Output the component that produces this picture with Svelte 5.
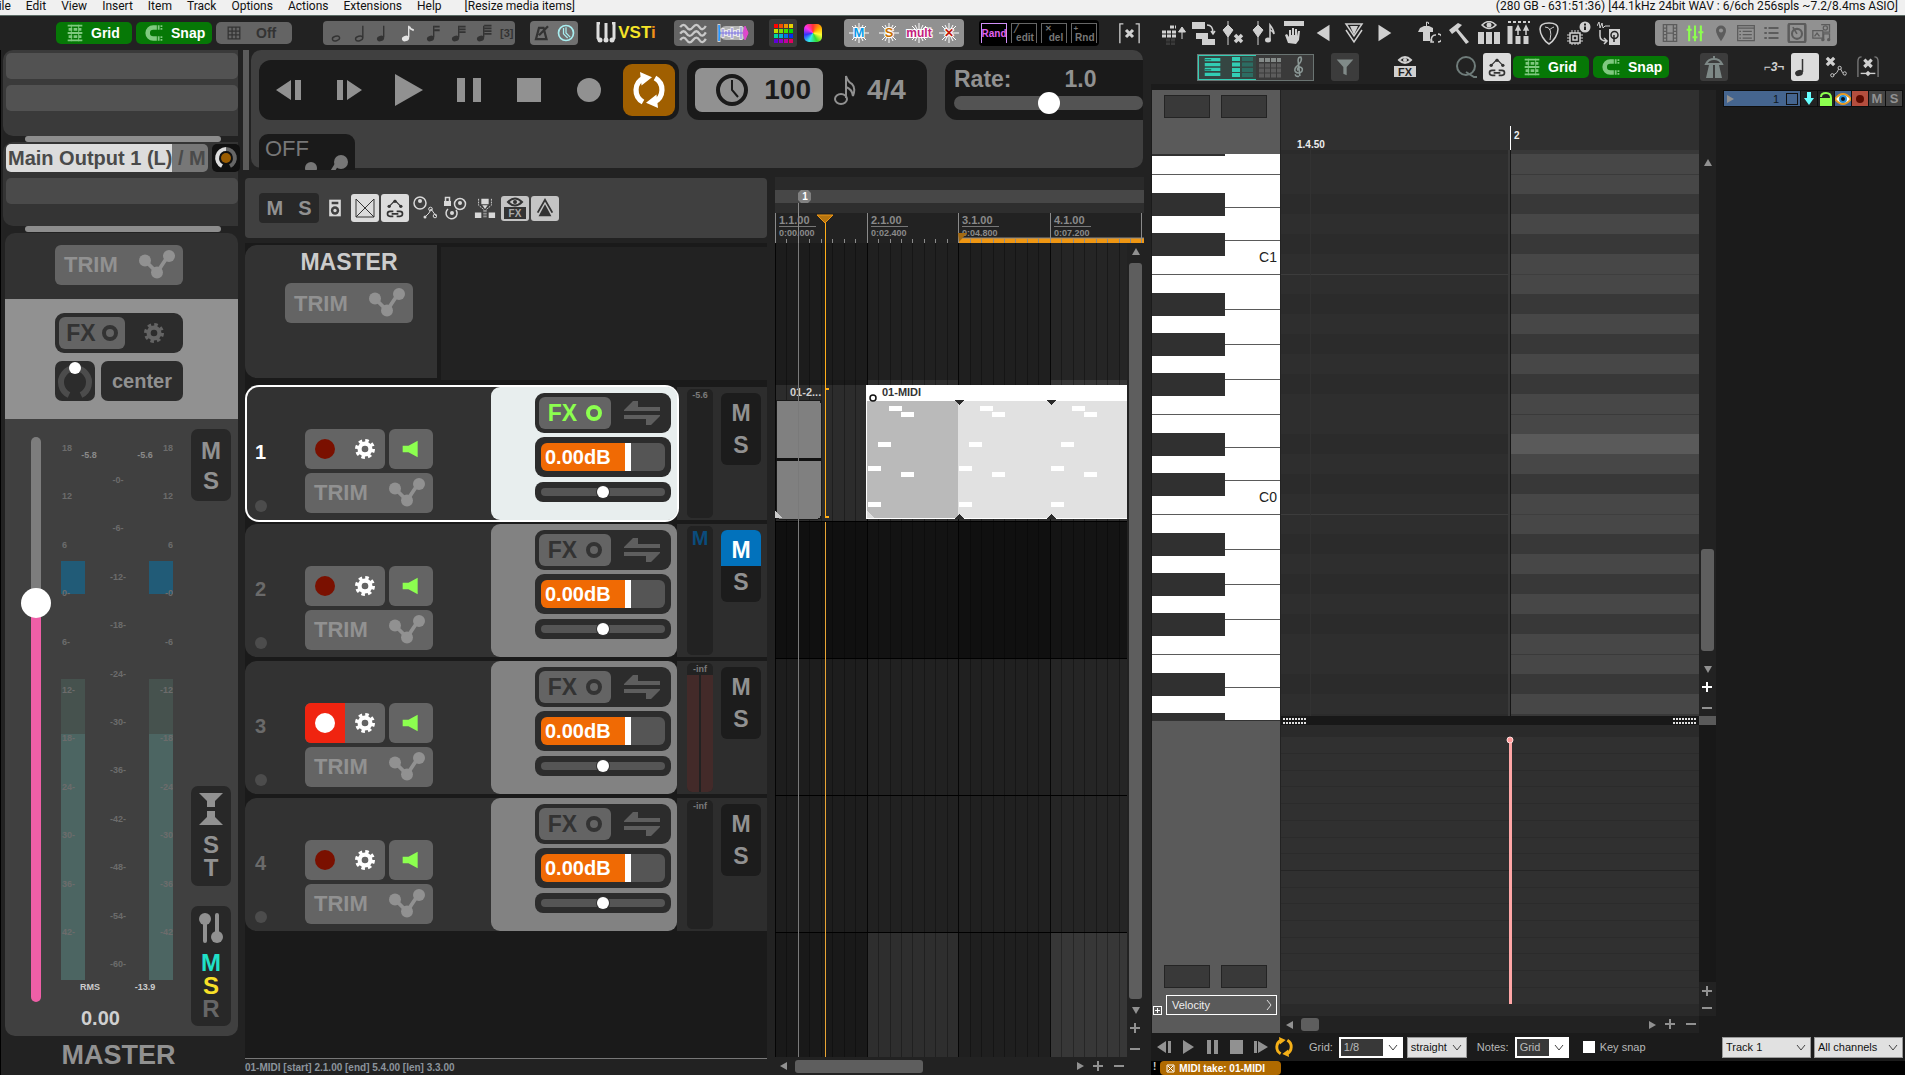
<script lang="ts">
  type Track = {
    id: number;
    selected?: boolean;
    muted?: boolean;
    armed?: boolean;
    fx?: boolean;
    peak?: string;
  };

  const menus = ['File', 'Edit', 'View', 'Insert', 'Item', 'Track', 'Options', 'Actions', 'Extensions', 'Help'];

  const tracks: Track[] = [
    { id: 1, selected: true, fx: true, peak: '-5.6' },
    { id: 2, muted: true },
    { id: 3, armed: true, peak: '-inf' },
    { id: 4, peak: '-inf' },
  ];

  const noteLengths = ['whole', 'half', 'quarter', 'eighth', 'n16', 'n32', 'n64'];
  const bursts = [
    { text: 'M', color: '#0a9be8', size: 13 },
    { text: 'S', color: '#c87000', size: 13 },
    { text: 'mult', color: '#c4207c', size: 12 },
    { text: '✕', color: '#c01808', size: 12 },
  ];
  const tools = ['gridUp', 'cascade', 'nodeX', 'nodeNote', 'hand', 'left', 'downTri', 'right'];
  const views = ['shirt', 'hammer', 'eyeBars', 'barsUp', 'pick', 'chip', 'drive'];
  const docks = ['film', 'sliders', 'pin', 'notepad', 'list', 'knobBox', 'media'];

  const stem = (flags: string) =>
    `<ellipse cx="6" cy="18" rx="4" ry="3" transform="rotate(-20 6 18)" fill="currentColor"/><path d="M9.5 17V4" stroke="currentColor" stroke-width="1.5"/><path d="${flags}" stroke="currentColor" stroke-width="2" fill="none"/>`;
  const eye = (y: number) =>
    `<path d="M5 ${y}q7-7 14 0q-7 7-14 0z" fill="none" stroke="currentColor" stroke-width="1.5"/><circle cx="12" cy="${y}" r="2.5" fill="currentColor"/>`;
  const chain =
    '<path d="M5 10l3-3 4-4 4 4 3 3" stroke="currentColor" fill="none" stroke-width="1.5"/><circle cx="5" cy="10" r="2" fill="currentColor"/><circle cx="12" cy="4" r="2" fill="currentColor"/><circle cx="19" cy="10" r="2" fill="currentColor"/><path d="M10 16H6a3 3 0 0 0 0 6h4M14 16h4a3 3 0 0 1 0 6h-4M8 19h8" fill="none" stroke="currentColor" stroke-width="2"/>';

  const icons: Record<string, string> = {
    grid: '<path d="M4 4h16M4 12h16M4 20h16" stroke="currentColor" stroke-width="2"/><path d="M5 8h14M5 16h14" stroke="currentColor" stroke-width="3" stroke-dasharray="4 1.5"/><path d="M8 3v18M16 3v18" stroke="currentColor" stroke-width="1"/>',
    snap: '<path d="M14 6h-4a6 6 0 0 0 0 12h4" fill="none" stroke="currentColor" stroke-width="5"/><path d="M16 3.500v5M16 15.500v5" stroke="currentColor" stroke-width="2"/><path d="M19 3.500v5M19 15.500v5" stroke="currentColor" stroke-width="2" stroke-dasharray="2 1"/>',
    cells: '<path d="M5 5h14v14H5zM5 9.700h14M5 14.300h14M9.700 5v14M14.300 5v14" fill="none" stroke="currentColor" stroke-width="1.500"/>',
    whole: '<ellipse cx="12" cy="18" rx="4" ry="2.500" transform="rotate(-15 12 18)" fill="none" stroke="currentColor" stroke-width="1.500"/>',
    half: '<ellipse cx="10" cy="18" rx="4" ry="2.500" transform="rotate(-15 10 18)" fill="none" stroke="currentColor" stroke-width="1.500"/><path d="M14 17V4" stroke="currentColor" stroke-width="1.500"/>',
    quarter: stem(''),
    eighth: stem('M10 5q1 3 5 4'),
    n16: stem('M10 5h6M10 9h6'),
    n32: stem('M10 5h7M10 8h7M10 11h7'),
    n64: stem('M10 4h8M10 7h8M10 10h8M10 13h8'),
    metronome: '<path d="M8 5h6l4 15H4zM8 15L20 3" fill="none" stroke="currentColor" stroke-width="3"/>',
    clock: '<circle cx="12" cy="12" r="9" fill="none" stroke="currentColor" stroke-width="2"/><path d="M12 5v7l5 5M9 6v7l5 5" fill="none" stroke="currentColor" stroke-width="1.500"/>',
    waves: '<path d="M1 7q3-4 5.500 0t5.500 0t5.500 0t5.500-1M1 12.500q3-4 5.500 0t5.500 0t5.500 0t5.500-1M1 18q3-4 5.500 0t5.500 0t5.500 0t5.500-1" fill="none" stroke="#c8c8c8" stroke-width="2"/>',
    gridUp: '<path d="M0 11h14M0 15h14M8 6h6" stroke="currentColor" stroke-width="3" stroke-dasharray="4 1"/><path d="M20 18v-9M16.500 11l3.500-5 3.500 5z" stroke="currentColor" fill="currentColor"/><path d="M4 19h10M4 23h10" stroke="#3a3a3a" stroke-width="3" stroke-dasharray="4 1"/>',
    cascade: '<path d="M0 1h13v7H0zM4 12h12v6H4zM10 18h13v6H10z" fill="currentColor"/><path d="M15 4q6 0 6 8m-2-2 2 3 2-3" fill="none" stroke="currentColor" stroke-width="1.500"/>',
    nodeX: '<path d="M6 0v24M6 4l5 5-5 7-5-7z" stroke="currentColor" fill="currentColor"/><path d="M13 14l7 7M20 14l-7 7" stroke="currentColor" stroke-width="3.500"/>',
    nodeNote: '<path d="M6 0v24M6 4l5 5-5 7-5-7z" stroke="currentColor" fill="currentColor"/><ellipse cx="16" cy="19" rx="3" ry="2.500" fill="currentColor"/><path d="M18 18V4q4 5 4 9-1-3-4-4" stroke="currentColor" stroke-width="1.500" fill="none"/>',
    hand: '<path d="M2 0h20v5H2z" fill="currentColor"/><path d="M6 22L3 14l2-1 2 3V9h2v5h1V7h2v7h1V8h2v7l1-5h2l-1 9-3 4z" fill="currentColor"/>',
    left: '<path d="M18 3v18L4 12z" fill="currentColor"/>',
    right: '<path d="M6 3v18l14-9z" fill="currentColor"/>',
    downTri: '<path d="M4 3h16l-8 12zM4 9l8 12 8-12" fill="none" stroke="currentColor" stroke-width="1.500"/><path d="M8 5h8l-4 9z" fill="currentColor"/>',
    shirt: '<path d="M3 7l4-2h5l4 2v4h-3v9H6v-9H1z" fill="currentColor"/><path d="M9.500 5V1q3 0 2 2" fill="none" stroke="currentColor"/><path d="M15 20a4 4 0 0 1 4-6m2-1a4 4 0 0 1 0 8m-7-3v3h3" fill="none" stroke="currentColor" stroke-width="1.500"/>',
    hammer: '<path d="M2 9L11 2l4 2-4 4 11 13-3 2L9 10l-4 3z" fill="currentColor"/>',
    eyeBars: eye(4) + '<path d="M4 11v12M12 11v12M20 11v12" stroke="currentColor" stroke-width="6"/>',
    barsUp: '<path d="M1 1h22" stroke="currentColor" stroke-width="2" stroke-dasharray="3 2"/><path d="M3 5v18M11 15v8M19 15v8" stroke="currentColor" stroke-width="5"/><path d="M11 14V7m-2 2 2-4 2 4zM19 14V7m-2 2 2-4 2 4z" stroke="currentColor" stroke-width="1.500" fill="currentColor"/>',
    pick: '<path d="M12 23C7 20 3 13 3 8q0-6 9-6t9 6c0 5-4 12-9 15z" fill="none" stroke="currentColor" stroke-width="1.500"/><path d="M8 6q8 0 5 13M12 9q4-3 5-3" stroke="currentColor" fill="none"/>',
    chip: '<path d="M3 12h10v10H3zM6 15h4v4H6z" fill="none" stroke="currentColor" stroke-width="1.500"/><path d="M5 9v3M8 9v3M11 9v3M5 22v2M8 22v2M11 22v2M0 14h3M0 17h3M0 20h3M13 14h3M13 17h3M13 20h3" stroke="currentColor"/><circle cx="18" cy="6" r="5.500" fill="currentColor"/><path d="M18 5.500V9M18 2.500v2" stroke="#222" stroke-width="2"/>',
    drive: '<path d="M0 5l2-4 1 6 2-5 1 5 2-2h5" fill="none" stroke="currentColor"/><path d="M3 9v6q0 5 7 5m-3-3 3 3-3 3" fill="none" stroke="currentColor" stroke-width="1.500"/><path d="M12 8h11v16H12z" fill="currentColor"/><circle cx="17.500" cy="14" r="3.500" fill="none" stroke="#222" stroke-width="1.500"/><path d="M17 14v7" stroke="#222" stroke-width="1.500"/>',
    film: '<path d="M4 2h16v20H4zM8 2v20M16 2v20M8 12h8M4 6h4M4 10h4M4 14h4M4 18h4M16 6h4M16 10h4M16 14h4M16 18h4" fill="none" stroke="currentColor" stroke-width="1.500"/>',
    sliders: '<path d="M5 3v19M12 3v19M19 3v19M2 8h6M9 17h6M16 11h6" stroke="#8cff4f" stroke-width="2.500"/>',
    pin: '<path d="M12 22Q6 13 6 9a6 6 0 0 1 12 0q0 4-6 13z" fill="currentColor"/><circle cx="12" cy="9" r="2.500" fill="#919191"/>',
    notepad: '<path d="M2 3h20v18H2zM2 6h20M8 10h11M8 14h11M8 18h11M4 10h2M4 14h2M4 18h2" fill="none" stroke="currentColor" stroke-width="1.500"/>',
    list: '<path d="M4 6h3M4 12h3M4 18h3M9 6h12M9 12h12M9 18h12" stroke="currentColor" stroke-width="2.500"/>',
    knobBox: '<rect x="2" y="1" width="20" height="22" rx="2" fill="none" stroke="currentColor" stroke-width="3"/><circle cx="12" cy="13" r="6" fill="none" stroke="currentColor" stroke-width="2.500"/><path d="M12 13L7 5" stroke="currentColor" stroke-width="2"/>',
    media: '<path d="M1 9h12v9H1zM3 16l3-4 3 4M11 2h10v9H13M14 20v-7h7v7" fill="none" stroke="currentColor" stroke-width="1.500"/><circle cx="16" cy="6" r="2.500" fill="none" stroke="currentColor" stroke-width="1.500"/><circle cx="13" cy="20" r="2" fill="currentColor"/><circle cx="20" cy="20" r="2" fill="currentColor"/>',
    bracketX: '<path d="M5 1H1v22M19 1h4v22" fill="none" stroke="currentColor" stroke-width="1.500"/><path d="M8 8l8 8M16 8l-8 8" stroke="currentColor" stroke-width="3.500"/>',
    rows1: '<path d="M3 4h17M3 20h17M3 9.500h17M3 14.500h17" stroke="#32cdb4" stroke-width="3.500"/><path d="M3 4h7M3 15h7" stroke="#1e7c6c" stroke-width="1.500"/>',
    rows2: '<path d="M2 4h8M2 9.500h8M2 15h8M2 20h8" stroke="#32cdb4" stroke-width="4"/><path d="M12 4h11M12 9.500h11M12 15h11M12 20h11" stroke="#2c6c62" stroke-width="4"/>',
    rows3: '<path d="M1 5h22" stroke="#858b89" stroke-width="4" stroke-dasharray="5 1"/><path d="M1 10.500h22M1 15.500h22M1 20.500h22" stroke="#5c5c5c" stroke-width="4" stroke-dasharray="5 1"/>',
    clef: '<path d="M12 22q-4 1-4-2M13 22L11 5q0-4 3-4 2 4-3 9-5 4-3 7 3 3 7 0 2-4-2-5-4 1-2 4" fill="none" stroke="#8b9896" stroke-width="1.700"/>',
    funnel: '<path d="M2 3h20l-8 9v10l-4-2v-8z" fill="#808a88"/>',
    q: '<circle cx="12" cy="11" r="9" fill="none" stroke="#6f7c7a" stroke-width="2"/><path d="M12 17l8 5h3" fill="none" stroke="#6f7c7a" stroke-width="2"/>',
    chain,
    road: '<path d="M4 9a9 9 0 0 1 16 0z" fill="none" stroke="#7d8886" stroke-width="2"/><path d="M12 1v4" stroke="#7d8886" stroke-width="2"/><path d="M7 10h4v13H4zM13 10h4l3 13h-7z" fill="#7d8886"/>',
    xEnv: '<path d="M2 2l8 8M10 2l-8 8" stroke="currentColor" stroke-width="3.500"/><path d="M9 21l4-3 3-6 3 6 3 3" fill="none" stroke="currentColor"/><circle cx="8" cy="21" r="1.800" fill="none" stroke="currentColor"/><circle cx="16" cy="13" r="1.800" fill="#222" stroke="currentColor"/><circle cx="21.500" cy="19" r="1.800" fill="#222" stroke="currentColor"/>',
    xSlide: '<path d="M5 1Q1 1 1 6v17M19 1q4 0 4 5v17" fill="none" stroke="#777" stroke-width="1.500"/><path d="M8 4l8 8M16 4l-8 8" stroke="currentColor" stroke-width="3.500"/><path d="M4 19h16" stroke="currentColor" stroke-width="1.500"/><path d="M12 16l3 3-3 3-3-3z" fill="currentColor"/>',
    speakerBox: '<path d="M5 2h14v20H5z" fill="currentColor"/><circle cx="12" cy="15" r="5" fill="#404040"/><circle cx="12" cy="15" r="2" fill="currentColor"/><path d="M8 6h8" stroke="#404040" stroke-width="3"/>',
    envBox: '<path d="M3 3v18h18V3M3 3l18 18M21 3L3 21" fill="none" stroke="currentColor"/>',
    knobEnv: '<circle cx="7" cy="7" r="6" fill="none" stroke="currentColor" stroke-width="1.500"/><circle cx="7" cy="5" r="2" fill="currentColor"/><path d="M12 21l4-4 2-4 5 7" fill="none" stroke="currentColor"/><circle cx="12" cy="21" r="1.500" fill="currentColor"/><circle cx="17.500" cy="13" r="1.800" fill="none" stroke="currentColor"/><circle cx="22" cy="20" r="1.800" fill="none" stroke="currentColor"/>',
    lockKnobs: '<path d="M1 5h7v5H1z" fill="currentColor"/><path d="M2.500 5V1.500h4V5" fill="none" stroke="currentColor" stroke-width="1.500"/><circle cx="17" cy="8" r="5.500" fill="none" stroke="currentColor" stroke-width="1.500"/><circle cx="17" cy="7" r="2" fill="currentColor"/><path d="M5 13a5.500 5.500 0 1 0 8 1" fill="none" stroke="currentColor" stroke-width="1.500"/><circle cx="9" cy="17" r="2" fill="currentColor"/>',
    routing: '<path d="M8 2h8v6H8zM1 17h7v6H1zM16 17h7v6h-7z" fill="currentColor"/><path d="M5 2v7l6 5v9M19 2v7l-6 5v9" fill="none" stroke="currentColor" stroke-dasharray="2 1"/><path d="M9 9h6l-3 4z" fill="currentColor"/>',
    upper: '<path d="M4 17L12 3l8 14" fill="none" stroke="currentColor" stroke-width="2"/><path d="M5 21L12 8l7 13z" fill="currentColor"/>',
    loop: '<path d="M8.500 4A9 9 0 0 0 8 20M15.500 20A9 9 0 0 0 16 4" fill="none" stroke="currentColor" stroke-width="3.500"/><path d="M6 0l8 3.500L7 9zM18 24l-8-3.500 7-5.500z" fill="currentColor"/>',
    gear: '<circle cx="12" cy="12" r="6.500" fill="none" stroke="currentColor" stroke-width="5"/><circle cx="12" cy="12" r="10" fill="none" stroke="currentColor" stroke-width="4" stroke-dasharray="4.200 3.650"/>',
    env: '<path d="M4 9l8 8 8-12" fill="none" stroke="currentColor" stroke-width="2.500"/><circle cx="4" cy="9" r="4" fill="currentColor"/><circle cx="12" cy="17" r="4" fill="currentColor"/><circle cx="20" cy="6" r="4" fill="currentColor"/>',
    monitor: '<path d="M2 8h7l11-6v20L9 16H2z" fill="currentColor"/>',
  };

  const scale = Array.from({ length: 11 }, (_, i) => i);
  const beats = Array.from({ length: 97 }, (_, i) => i);
  const bars = Array.from({ length: 12 }, (_, i) => i);
  const barX = (bar: number) => Math.round(bar * 91.6);
  const lanes = [
    { y: 0, h: 137, fills: ['#1c1c1c', '#202020', '#1f1f1f', '#252525'] },
    { y: 137, h: 5, fills: ['#1a1a1a', '#2d2d2d', '#202020', '#363636'] },
    { y: 142, h: 136, fills: ['#2c2c2c', '#303030', '#2c2c2c', '#303030'] },
    { y: 279, h: 136, fills: ['#101010', '#131313', '#101010', '#141414'] },
    { y: 416, h: 136, fills: ['#1d1d1d', '#212121', '#202020', '#252525'] },
    { y: 553, h: 136, fills: ['#1d1d1d', '#212121', '#202020', '#252525'] },
    { y: 690, h: 900, fills: ['#191919', '#2e2e2e', '#1f1f1f', '#373737'] },
  ];
  const times = [
    ['1.1.00', '0:00.000'],
    ['2.1.00', '0:02.400'],
    ['3.1.00', '0:04.800'],
    ['4.1.00', '0:07.200'],
  ];
  const notes = [
    [22, 21],
    [34, 27],
    [11, 57],
    [1, 81],
    [34, 87],
    [1, 117],
  ];

  // octaves are 240px tall, measured from the top of B
  const octaves = [-120, 120, 360, 600, 840];
  const blackKeys = [20, 60, 100, 160, 200];
  const whiteLines = [35, 70, 105, 173, 206];
</script>

{#snippet icon(name: string, size = 24)}
  <svg class="icon" width={size} height={size} viewBox="0 0 24 24" aria-hidden="true">{@html icons[name]}</svg>
{/snippet}

{#snippet gridSnap()}
  <button class="toggle on">{@render icon('grid', 22)}Grid</button>
  <button class="toggle on">{@render icon('snap', 22)}Snap</button>
{/snippet}

{#snippet trim()}
  <button class="trim">TRIM {@render icon('env', 36)}</button>
{/snippet}

{#snippet cycle(kind: string)}
  <svg class="icon" width="32" height="32" viewBox="0 0 32 32" aria-hidden="true">
    {#if kind === 'prev'}
      <path d="M18 6v20L3 16zM22 6h6v20h-6z" fill="currentColor" />
    {:else if kind === 'next'}
      <path d="M14 6v20l15-10zM4 6h6v20H4z" fill="currentColor" />
    {:else if kind === 'play'}
      <path d="M2 0v32l28-16z" fill="currentColor" />
    {:else if kind === 'pause'}
      <path d="M4 4h8v24H4zM20 4h8v24h-8z" fill="currentColor" />
    {:else if kind === 'stop'}
      <path d="M4 4h24v24H4z" fill="currentColor" />
    {:else}
      <circle cx="16" cy="16" r="12" fill="currentColor" />
    {/if}
  </svg>
{/snippet}

{#snippet zoomButtons(bright = false)}
  <button class="zoom" class:bright aria-label="Zoom in"><svg width="11" height="11"><path d="M5 0v10M0 5h10" stroke="currentColor" stroke-width="2" /></svg></button>
  <button class="zoom" aria-label="Zoom out"><svg width="11" height="11"><path d="M0 5h10" stroke="currentColor" stroke-width="2" /></svg></button>
{/snippet}

{#snippet grip()}
  <svg width="24" height="6"><path d="M0 1h24M0 5h24" stroke="#e0e0e0" stroke-width="2" stroke-dasharray="2 1" /></svg>
{/snippet}

{#snippet chevron()}
  <svg width="10" height="6"><path d="M1 0l4 5 4-5" fill="none" stroke="#444" /></svg>
{/snippet}

<div class="app">
  <header class="menubar">
    <nav>
      {#each menus as menu}
        <button>{menu}</button>
      {/each}
      <span class="hint">[Resize media items]</span>
    </nav>
    <span>(280 GB - 631:51:36) [44.1kHz 24bit WAV : 6/6ch 256spls ~7.2/8.4ms ASIO]</span>
  </header>

  <div class="toolbar main-tools">
    <div class="set wide-gap">
      {@render gridSnap()}
      <button class="toggle cells">{@render icon('cells', 20)}Off</button>
    </div>
    <div class="group lengths">
      {#each noteLengths as n}
        <button class:lit={n === 'eighth'} aria-label={n}>{@render icon(n, 22)}</button>
      {/each}
      <button>[3]</button>
    </div>
    <div class="group sync">
      <button aria-label="Metronome">{@render icon('metronome', 18)}</button>
      <button class="cyan" aria-label="Clock">{@render icon('clock', 20)}</button>
    </div>
    <button class="vsti">
      <svg width="20" height="22" viewBox="0 0 20 22"><path d="M4 1H2v15l2 3M10 1v17M16 1h2v15l-2 3" fill="none" stroke="#ddd" stroke-width="3" /><circle cx="4" cy="18" r="2.500" fill="#ddd" /><circle cx="10" cy="18" r="2.500" fill="#ddd" /><circle cx="16" cy="18" r="2.500" fill="#ddd" /></svg>
      <span>VST<i>i</i></span>
    </button>
    <div class="group waves">
      <button aria-label="Envelopes">{@render icon('waves', 28)}</button>
      <button aria-label="Waveform">
        <svg width="32" height="24" viewBox="0 0 32 24">
          <defs>
            <linearGradient id="wf"><stop offset="0" stop-color="#1e9cff" /><stop offset="1" stop-color="#f040c8" /></linearGradient>
          </defs>
          <rect x="2" y="5" width="28" height="14" rx="7" fill="#fff" opacity="0.5" />
          <path d="M2 3v18M6 7v10M9 9v6M12 8v8M15 6v12M18 9v6M21 8v8M24 5v14" stroke="#fff" stroke-width="3" opacity="0.7" />
          <path d="M2 4v16M6 8v8M9 10v4M12 9v6M15 7v10M18 10v4M21 9v6M24 6v12M2 12h24" stroke="#7a70e0" stroke-width="1" />
          <path d="M2 4v16l1-8zM26 12l2-7 3 7-3 7z" fill="url(#wf)" stroke="url(#wf)" stroke-width="1" />
        </svg>
      </button>
    </div>
    <div class="set colors">
      <button class="palette" aria-label="Palette">
        {#each ['#ff0000', '#f05000', '#f09000', '#e8d000', '#c0e000', '#80e000', '#40e000', '#00d800', '#00d8a0', '#00b0d8', '#0070e8', '#0030f0', '#6000d8', '#9000c8', '#c000a0', '#e00060'] as c}
          <span style="background: {c}"></span>
        {/each}
      </button>
      <button class="wheel" aria-label="Color wheel"></button>
    </div>
    <div class="group bursts">
      {#each bursts as b}
        <button>
          <svg width="30" height="26" viewBox="0 0 30 26">
            <path d="M15 3v20M5 13h20M8 6l14 14M22 6L8 20M11 5l8 16M19 5l-8 16" stroke="#fff" stroke-width="1" />
            <text x="15" y="17" text-anchor="middle" font-size={b.size} font-weight="700" fill={b.color} stroke="#fff" stroke-width="2" paint-order="stroke">{b.text}</text>
          </svg>
        </button>
      {/each}
    </div>
    <div class="group rand">
      <button class="hot">Rand</button>
      <button><sup>╱</sup>edit</button>
      <button><sup>✕</sup>del</button>
      <button><sup>+</sup>Rnd</button>
    </div>
    <div class="set slots">
      <button aria-label="Clear selection">{@render icon('bracketX', 21)}</button>
    </div>
    <div class="set slots">
      {#each tools as t}
        <button aria-label={t}>{@render icon(t, t === 'left' || t === 'right' ? 22 : 24)}</button>
      {/each}
    </div>
    <div class="set slots wide-gap">
      {#each views as v}
        <button aria-label={v}>{@render icon(v)}</button>
      {/each}
    </div>
    <div class="group docks">
      {#each docks as d}
        <button aria-label={d}>{@render icon(d, 20)}</button>
      {/each}
    </div>
  </div>

  <div class="workspace">
    <aside class="mixer">
      <div class="sends">
        <div class="slot"></div>
        <div class="slot"></div>
      </div>
      <div class="thin-scroll"></div>
      <div class="sends outputs">
        <div class="output-row">
          <button class="output">Main Output 1 (L) / M</button>
          <span class="mini-knob"><svg width="24" height="24"><path d="M8 20a9 9 0 0 1 4-17" stroke="#ddd" stroke-width="4" fill="none" /><path d="M12 3a9 9 0 0 1 4 17" stroke="#666" stroke-width="4" fill="none" /><circle cx="12" cy="12" r="5" fill="#9a5c00" /></svg></span>
        </div>
        <div class="slot dim"></div>
      </div>
      <div class="thin-scroll"></div>

      <div class="mix-trim">{@render trim()}</div>
      <div class="mix-fx">
        <div class="pill">
          <button class="fx">FX <span class="ring"></span></button>
          <button class="gear" aria-label="FX settings">{@render icon('gear', 20)}</button>
        </div>
        <div class="pan-row">
          <button class="knob" aria-label="Pan"><svg width="40" height="40"><path d="M14 34a14 14 0 1 1 12 0" fill="none" stroke="#4c4c4c" stroke-width="6" /><circle cx="20" cy="7" r="6" fill="#fff" /></svg></button>
          <button class="center">center</button>
        </div>
      </div>

      <div class="mix-main">
        <div class="fader"><input type="range" aria-label="Master volume" min="0" max="1000" value="718" /></div>
        <div class="meter-col">
          <svg class="meter" width="112" height="562">
            <rect y="124" width="24" height="33" fill="#215b77" />
            <rect x="88" y="124" width="24" height="33" fill="#215b77" />
            <rect y="242" width="24" height="55" fill="#46524e" />
            <rect x="88" y="242" width="24" height="55" fill="#46524e" />
            <rect y="297" width="24" height="246" fill="#4c6562" />
            <rect x="88" y="297" width="24" height="246" fill="#4c6562" />
            {#each scale as i}
              <text x="1" y={14 + Math.round(i * 48.4)}>{i < 3 ? 18 - i * 6 : `${(i - 3) * 6}-`}</text>
              <text x="112" y={14 + Math.round(i * 48.4)} text-anchor="end">{i < 3 ? 18 - i * 6 : `-${(i - 3) * 6}`}</text>
              <text x="57" y={46 + Math.round(i * 48.4)} text-anchor="middle">-{i * 6}-</text>
            {/each}
            <text x="28" y="21" text-anchor="middle" class="peak">-5.8</text>
            <text x="84" y="21" text-anchor="middle" class="peak">-5.6</text>
            <text x="29" y="553" text-anchor="middle" class="rms">RMS</text>
            <text x="84" y="553" text-anchor="middle" class="rms">-13.9</text>
          </svg>
          <output>0.00</output>
        </div>
        <div class="mix-buttons">
          <div class="stack ms"><button>M</button><button>S</button></div>
          <div class="stack st">
            <svg width="24" height="32"><path d="M0 0h24l-8 8v6H8V8zM0 32h24l-8-8v-6H8v6z" fill="currentColor" /></svg>
            <button>S</button><button>T</button>
          </div>
          <div class="stack msr">
            <svg width="24" height="30"><path d="M6 6v22M18 2v22" stroke="currentColor" stroke-width="4" stroke-linecap="round" /><circle cx="6" cy="6" r="6" fill="currentColor" /><circle cx="18" cy="24" r="6" fill="currentColor" /></svg>
            <button class="teal">M</button><button class="yellow">S</button><button class="off">R</button>
          </div>
        </div>
      </div>
      <div class="mix-name">MASTER</div>
    </aside>

    <main class="center-col">
      <div class="transport-row">
        <div class="divider"></div>
        <section class="transport">
          <div class="transport-boxes">
            <div class="box controls">
              {#each ['prev', 'next', 'play', 'pause', 'stop', 'record'] as k}
                <button aria-label={k}>{@render cycle(k)}</button>
              {/each}
              <button class="loop" aria-label="Repeat">{@render icon('loop', 36)}</button>
            </div>
            <div class="box tempo">
              <button class="bpm">
                <svg width="34" height="34"><circle cx="17" cy="17" r="14" fill="none" stroke="#1a1a1a" stroke-width="4" /><path d="M17 7v10l6 7" fill="none" stroke="#1a1a1a" stroke-width="2" /></svg>
                100
              </button>
              <svg width="22" height="32"><ellipse cx="7" cy="25" rx="6" ry="5" fill="none" stroke="#919191" stroke-width="2" /><path d="M12 24V2q2 6 6 8 4 4 1 12-1-7-7-9" fill="none" stroke="#919191" stroke-width="2" /></svg>
              <button>4/4</button>
            </div>
            <div class="box rate">
              <div><label for="rate">Rate:</label><span>1.0</span></div>
              <input id="rate" type="range" min="0" max="100" value="50" />
            </div>
          </div>
          <button class="auto">OFF<svg width="48" height="18"><circle cx="10" cy="16" r="6" fill="#777" /><path d="M36 12l-5 8" stroke="#777" stroke-width="4" /><circle cx="40" cy="10" r="7" fill="#777" /></svg></button>
        </section>
      </div>

      <div class="project">
        <section class="tcp">
          <div class="tcp-tools">
            <div class="all-ms"><button>M</button><button>S</button></div>
            <button aria-label="Monitor">{@render icon('speakerBox', 20)}</button>
            <button class="white" aria-label="Crossfade">{@render icon('envBox', 24)}</button>
            <button class="white" aria-label="Link envelopes">{@render icon('chain', 20)}</button>
            <button aria-label="Knob envelope">{@render icon('knobEnv', 24)}</button>
            <button aria-label="Lock knobs">{@render icon('lockKnobs', 24)}</button>
            <button aria-label="Routing">{@render icon('routing', 22)}</button>
            <button class="white short" aria-label="Show FX"><svg width="24" height="22"><path d="M5 5q7-7 14 0q-7 7-14 0z" fill="none" stroke="currentColor" stroke-width="2" /><circle cx="12" cy="5" r="2" fill="currentColor" /><path d="M1 10h22v12H1z" fill="currentColor" /><text x="12" y="20" text-anchor="middle" font-size="10" font-weight="700" fill="#aaa">FX</text></svg></button>
            <button class="white short" aria-label="Collapse">{@render icon('upper', 22)}</button>
          </div>
          <div class="master-row">
            <div class="master-card">
              <span>MASTER</span>
              {@render trim()}
            </div>
            <div class="master-rest"></div>
          </div>
          <div class="tracks">
            {#each tracks as track (track.id)}
              <div class="track" class:selected={track.selected}>
                <div class="card">
                  <div class="gutter"><span>{track.id}</span><i></i></div>
                  <div class="rec-area">
                    <div class="rec-row">
                      <div class="rec-box">
                        <button class="rec" class:armed={track.armed} aria-label="Record arm"><i></i></button>
                        <button aria-label="Input settings">{@render icon('gear', 20)}</button>
                      </div>
                      <button class="monitor" aria-label="Monitoring">{@render icon('monitor', 20)}</button>
                    </div>
                    {@render trim()}
                  </div>
                  <div class="panel">
                    <div class="pill">
                      <button class="fx" class:active={track.fx}>FX <span class="ring"></span></button>
                      <button aria-label="Routing"><svg width="36" height="24"><path d="M0 9L9 0h5v6h22v4H0zM36 15l-9 9h-5v-6H0v-4h36z" fill="#5e5e5e" /></svg></button>
                    </div>
                    <div class="volume">
                      <input type="range" aria-label="Volume" min="0" max="1000" value="712" />
                      <span>0.00dB</span>
                    </div>
                    <div class="pan"><input type="range" aria-label="Pan" value="50" /></div>
                  </div>
                </div>
                <div class="track-meter" class:input={track.armed}>
                  {#if track.muted}<b>M</b>{:else}<span>{track.peak}</span>{/if}
                  <div><i></i><i></i></div>
                </div>
                <div class="mute-solo">
                  <button class="mute" class:muted={track.muted}>M</button>
                  <button class="solo">S</button>
                </div>
              </div>
            {/each}
          </div>
          <div class="status">01-MIDI [start] 2.1.00 [end] 5.4.00 [len] 3.3.00</div>
        </section>

        <section class="arrange">
          <svg class="ruler" width="100%" height="66">
            <rect width="100%" height="66" fill="#222" />
            <rect width="100%" height="13" fill="#2a2a2a" />
            <rect y="13" width="100%" height="13" fill="#474747" />
            <rect y="26" width="100%" height="10" fill="#2e2e2e" />
            <rect x={barX(2)} y="61" width="100%" height="5" fill="#ef9612" />
            <path d="M{barX(2)} 61h2000" stroke="#8a8a8a" />
            {#each beats as b}
              <rect x={barX(b / 8)} y="62" width="1" height="4" fill="#8a8a8a" />
            {/each}
            {#each bars as b}
              <rect x={barX(b)} y="36" width="1" height="30" fill="#8a8a8a" />
            {/each}
            {#each times as [bar, time], i}
              <text x={barX(i) + 4} y="47" font-size="11">{bar}</text>
              <rect x={barX(i) + 4} y="49" width="37" height="1" fill="#777" />
              <text x={barX(i) + 4} y="59" font-size="9">{time}</text>
            {/each}
            <path d="M{barX(2)} 56h9l-8 9z" fill="#a56a10" />
            <path d="M26 13h7l3 3v7l-3 3h-7l-3-3v-7z" fill="#808080" />
            <text x="30" y="23" font-size="10" text-anchor="middle" class="mark">1</text>
            <rect x="23" y="26" width="1" height="40" fill="#8a8a8a" />
            <rect x="50" y="44" width="1" height="22" fill="#ffae1a" />
            <path d="M42 38h16l-8 8z" fill="#b57410" stroke="#ef9612" />
          </svg>
          <div class="canvas-row">
            <div class="canvas">
              <svg width="100%" height="100%" shape-rendering="crispEdges">
                {#each lanes as lane}
                  {#each bars as b}
                    <rect x={barX(b)} y={lane.y} width="92" height={lane.h} fill={lane.fills[b % 4]} />
                  {/each}
                {/each}
                {#each beats as b}
                  <rect x={barX(b / 8)} width="1" height="100%" fill="#000" opacity={b % 8 ? 0.3 : 0.8} />
                {/each}
                {#each [278, 415, 552, 689] as y}
                  <rect {y} width="100%" height="1" fill="#000" />
                {/each}

                <rect x="1" y="157" width="45" height="119" rx="3" fill="#808080" stroke="#1a1a1a" />
                <rect x="1" y="215" width="45" height="3" fill="#111" />
                <path d="M0 268l7 7H0z" fill="#ccc" />
                <text x="15" y="153" class="clip-dark">01-2...</text>

                <rect x="91" y="142" width="100%" height="134" fill="#fff" />
                <rect x="92" y="158" width="91" height="117" fill="#bababa" />
                <rect x="183" y="158" width="100%" height="117" fill="#e1e1e1" />
                <path d="M92 268l7 7h-7z" fill="#ddd" />
                {#each [1, 2, 3] as bar}
                  {#each notes as [x, y]}
                    <rect x={barX(bar) + x} y={142 + y} width="13" height="5" fill="#fff" />
                  {/each}
                {/each}
                {#each [2, 3] as bar}
                  <path d="M{barX(bar) - 4} 157h10l-5 5zM{barX(bar) - 4} 276h10l-5-5z" fill="#2a2a2a" />
                {/each}
                <circle cx="98" cy="155" r="3" fill="none" stroke="#111" stroke-width="1.500" shape-rendering="auto" />
                <text x="107" y="153" class="clip-light">01-MIDI</text>

                <rect x="23" width="1" height="100%" fill="#7a7a7a" />
                <rect x="50" width="1" height="275" fill="#ffae1a" />
                <path d="M50 145h4v2h-4zM50 273h4v2h-4z" fill="#ffae1a" />
                <rect x="50" y="279" width="1" height="100%" fill="#e8a434" />
              </svg>
            </div>
            <div class="vscroll">
              <i class="tri up"></i>
              <div class="thumb"></div>
              <i class="tri down"></i>
              {@render zoomButtons()}
            </div>
          </div>
          <div class="hscroll">
            <i class="tri lft"></i>
            <div class="thumb"></div>
            <i class="tri rgt"></i>
            {@render zoomButtons()}
          </div>
        </section>
      </div>
    </main>

    <section class="midi">
      <div class="toolbar midi-tools">
        <div class="modes">
          <button class="sel" aria-label="Piano roll">{@render icon('rows1', 22)}</button>
          <button class="sel" aria-label="Named notes">{@render icon('rows2', 24)}</button>
          <button aria-label="Event list">{@render icon('rows3', 24)}</button>
          <button aria-label="Notation">{@render icon('clef', 22)}</button>
        </div>
        <button class="tile apart" aria-label="Filter">{@render icon('funnel', 20)}</button>
        <button class="slot-btn far" aria-label="FX">
          <svg width="24" height="24"><path d="M6 5q6-6 12 0q-6 6-12 0z" fill="none" stroke="currentColor" stroke-width="2" /><circle cx="12" cy="5" r="2" fill="currentColor" /><path d="M1 11h22v11H1z" fill="currentColor" /><text x="12" y="21" text-anchor="middle" font-size="11" font-weight="700" fill="#222">FX</text></svg>
        </button>
        <button class="slot-btn far" aria-label="Quantize">{@render icon('q')}</button>
        <button class="tile pale" aria-label="Link">{@render icon('chain', 20)}</button>
        <div class="set">{@render gridSnap()}</div>
        <button class="tile far" aria-label="Step">{@render icon('road')}</button>
        <button class="slot-btn far triplet">⌐3¬</button>
        <button class="tile pale" aria-label="Quarter">{@render icon('quarter', 24)}</button>
        <button class="slot-btn" aria-label="Delete envelope">{@render icon('xEnv', 22)}</button>
        <button class="slot-btn" aria-label="Clear slide">{@render icon('xSlide', 22)}</button>
      </div>

      <div class="midi-body">
        <div class="keys-col">
          <div class="pads"><button aria-label="Pad 1"></button><button aria-label="Pad 2"></button></div>
          <div class="keyboard">
            <svg width="128" height="100%" shape-rendering="crispEdges">
              <rect width="128" height="100%" fill="#fff" />
              {#each octaves as o}
                <rect y={o} width="128" height="1" fill="#5a5a5a" />
                <rect y={o + 140} width="128" height="1" fill="#5a5a5a" />
                {#each whiteLines as l}
                  <rect x="73" y={o + l} width="55" height="1" fill="#5a5a5a" />
                {/each}
                {#each blackKeys as k}
                  <rect y={o + k - 1} width="73" height="23" fill="#303030" />
                {/each}
              {/each}
              <text x="125" y="108" text-anchor="end">C1</text>
              <text x="125" y="348" text-anchor="end">C0</text>
            </svg>
          </div>
          <div class="lane-head">
            <div class="pads"><button aria-label="Pad 3"></button><button aria-label="Pad 4"></button></div>
            <div class="lane-pick">
              <button class="plus" aria-label="Add lane"><svg width="9" height="9"><path d="M4 2h1v5H4zM2 4h5v1H2z" fill="#fff" /></svg></button>
              <button class="lane-name">Velocity <svg width="6" height="10"><path d="M1 0l4 5-4 5" fill="none" stroke="#ddd" /></svg></button>
            </div>
          </div>
        </div>

        <div class="roll-col">
          <div class="roll-ruler">
            <svg width="100%" height="60">
              <text x="16" y="58">1.4.50</text>
              <rect x="229" y="36" width="1" height="24" fill="#fff" />
              <text x="233" y="49">2</text>
            </svg>
          </div>
          <div class="roll">
            <svg width="100%" height="100%" shape-rendering="crispEdges">
              <rect width="100%" height="100%" fill="#2e2e2e" />
              <rect x="230" width="100%" height="100%" fill="#474747" />
              {#each octaves as o}
                {#each blackKeys as k}
                  <rect y={o + 4 + k} width="229" height="20" fill="#2b2b2b" />
                  <rect x="230" y={o + 4 + k} width="100%" height="20" fill={o === 120 && k === 160 ? '#5a5a5a' : '#383838'} />
                {/each}
                <rect y={o + 4} width="229" height="1" fill="#3c3c3c" />
                <rect x="230" y={o + 4} width="100%" height="1" fill="#3e3e3e" />
                <rect x="230" y={o + 144} width="100%" height="1" fill="#3a3a3a" />
              {/each}
              <rect x="29" width="1" height="100%" fill="#323232" />
              <rect x="227" width="2" height="100%" fill="#3a3a3a" />
              <rect x="229" width="1" height="100%" fill="#151515" />
            </svg>
          </div>
          <div class="splitter">{@render grip()}{@render grip()}</div>
          <div class="velocity">
            <svg width="100%" height="291">
              <rect y="12" width="100%" height="267" fill="#303030" />
              {#each scale.concat([11, 12, 13, 14]) as i}
                <rect y={28 + Math.round(i * 16.7)} width="100%" height="1" fill={i === 7 ? '#252525' : '#2b2b2b'} />
              {/each}
              <rect x="228" y="14" width="3" height="265" fill="#ffa6a6" />
              <circle cx="229" cy="15" r="3" fill="#ff9a9a" stroke="#ffdcdc" />
            </svg>
          </div>
          <div class="hscroll midi-h">
            <i class="tri lft"></i>
            <div class="thumb"></div>
            <i class="tri rgt"></i>
            {@render zoomButtons()}
          </div>
        </div>

        <div class="midi-v">
          <div class="v-top">
            <i class="tri up"></i>
            <div class="thumb"></div>
            <i class="tri down"></i>
            {@render zoomButtons(true)}
          </div>
          <div class="v-corner"></div>
          <div class="v-bottom">{@render zoomButtons()}</div>
        </div>

        <div class="track-list">
          <div class="item">
            <span class="name"><i class="tri rgt"></i><span>1</span><b></b></span>
            <button aria-label="Send"><svg width="12" height="15"><path d="M6 1v7" stroke="#6ff" stroke-width="4" /><path d="M1 7h10l-5 7z" fill="#6ff" /></svg></button>
            <button aria-label="Lock"><svg width="14" height="14"><path d="M1 6h12v8H1z" fill="#8cff4f" /><path d="M2 5q0-4 5-4t5 5" fill="none" stroke="#8cff4f" stroke-width="2" /></svg></button>
            <button class="vis" aria-label="Visible"><svg width="16" height="14"><path d="M0 7q8-10 16 0q-8 10-16 0z" fill="#fff" stroke="#e89a20" stroke-width="2" /><circle cx="8" cy="7" r="4" fill="#2a8fd8" /><circle cx="8" cy="7" r="2" fill="#111" /></svg></button>
            <button class="armed" aria-label="Arm"><svg width="10" height="10"><circle cx="5" cy="5" r="4" fill="#5c0a00" /></svg></button>
            <button class="grey">M</button>
            <button class="grey">S</button>
          </div>
        </div>
      </div>

      <div class="midi-footer">
        <div class="mini-transport">
          <button aria-label="Previous"><svg width="16" height="16"><path d="M10 2v12L1 8zM12 2h3v12h-3z" fill="currentColor" /></svg></button>
          <button aria-label="Play"><svg width="16" height="16"><path d="M3 1v14l11-7z" fill="currentColor" /></svg></button>
          <button aria-label="Pause"><svg width="16" height="16"><path d="M3 1h4v14H3zM10 1h4v14h-4z" fill="currentColor" /></svg></button>
          <button aria-label="Stop"><svg width="16" height="16"><path d="M2 1h13v14H2z" fill="currentColor" /></svg></button>
          <button aria-label="Next"><svg width="16" height="16"><path d="M6 2v12l10-6zM2 2h3v12H2z" fill="currentColor" /></svg></button>
          <button class="amber" aria-label="Repeat">{@render icon('loop', 20)}</button>
        </div>
        <label for="grid-size">Grid:</label>
        <div class="combo editable size"><select id="grid-size"><option>1/8</option></select>{@render chevron()}</div>
        <div class="combo shape"><select aria-label="Grid shape"><option>straight</option></select>{@render chevron()}</div>
        <label for="note-size">Notes:</label>
        <div class="combo editable notes"><select id="note-size"><option>Grid</option></select>{@render chevron()}</div>
        <label class="snap"><input type="checkbox" />Key snap</label>
        <div class="combo end"><select aria-label="Track"><option>Track 1</option></select>{@render chevron()}</div>
        <div class="combo last"><select aria-label="Channel"><option>All channels</option></select>{@render chevron()}</div>
      </div>
      <div class="tabs">
        <span>!</span>
        <button><svg width="9" height="9"><path d="M1 1h7v7H1zM2 2l5 5M7 2L2 7" fill="none" stroke="#fff" /></svg>MIDI take: 01-MIDI</button>
      </div>
    </section>
  </div>
</div>

<style>
  :global(body) {
    background: #222;
    overflow: hidden;
  }

  .app {
    display: flex;
    flex-direction: column;
    height: 100vh;
    background: #222;
    color: #919191;
    font-family: 'Liberation Sans', Arial, sans-serif;
    font-size: 11px;
  }

  .app :global(*) {
    box-sizing: border-box;
  }

  button {
    display: flex;
    align-items: center;
    justify-content: center;
    flex-shrink: 0;
    margin: 0;
    padding: 0;
    border: 0;
    background: none;
    color: inherit;
    font: inherit;
  }

  svg {
    display: block;
    flex-shrink: 0;
  }

  input {
    margin: 0;
  }

  .menubar {
    display: flex;
    justify-content: space-between;
    height: 16px;
    padding-right: 7px;
    background: #f0f0f0;
    border-bottom: 1px solid #5c6c66;
    color: #111;
    font-family: Roboto, 'Open Sans', sans-serif;
    font-size: 12px;
    line-height: 12px;
    white-space: nowrap;
  }

  .menubar nav {
    display: flex;
    gap: 15px;
    margin-left: -8px;
    height: 12px;
  }

  .menubar .hint {
    margin-left: 8px;
  }

  .toolbar {
    display: flex;
    align-items: center;
    flex-shrink: 0;
    height: 34px;
    color: #d0d0d0;
  }

  .main-tools {
    height: 36px;
    gap: 15px;
    padding-left: 56px;
    padding-bottom: 2px;
  }

  .set {
    display: flex;
    align-items: center;
    gap: 4px;
  }

  .wide-gap {
    margin-right: 16px;
  }

  .toggle {
    justify-content: flex-start;
    gap: 5px;
    width: 76px;
    height: 22px;
    padding-left: 8px;
    border-radius: 5px;
    background: #646464;
    color: #333;
    font-size: 14px;
    font-weight: 700;
  }

  .toggle.on {
    background: #067806;
    color: #fff;
  }

  .toggle.on .icon {
    color: #7fc97f;
  }

  .toggle.cells {
    gap: 12px;
  }

  .group {
    display: flex;
    align-items: center;
    justify-content: space-around;
    height: 24px;
    border-radius: 4px;
    background: #646464;
    color: #333;
    font-weight: 700;
  }

  .lengths {
    width: 192px;
  }

  .lit {
    color: #e4e4e4;
  }

  .sync {
    width: 48px;
    background: #707070;
  }

  .cyan {
    color: #a8eef0;
  }

  .vsti {
    gap: 2px;
    width: 66px;
    color: #f5e428;
    font-size: 17px;
    font-weight: 700;
  }

  .vsti i {
    color: #f09018;
    font-style: normal;
  }

  .waves {
    width: 80px;
    height: 26px;
  }

  .colors {
    width: 60px;
  }

  .palette {
    display: grid;
    grid-template-columns: repeat(4, 4px);
    gap: 1px;
    width: 28px;
    height: 28px;
    align-content: center;
    background: #3a3a3a;
    border-radius: 3px;
  }

  .palette span {
    width: 4px;
    height: 4px;
  }

  .wheel {
    width: 18px;
    height: 18px;
    margin-left: 3px;
    border-radius: 5px;
    background: conic-gradient(#f33, #fa0, #ff3, #3d3, #3ee, #33f, #f3e, #f33);
  }

  .bursts {
    width: 120px;
    height: 28px;
    background: #919191;
  }

  .rand {
    width: 120px;
    height: 26px;
    background: #000;
    color: #777;
    font-size: 10px;
  }

  .rand button {
    width: 26px;
    height: 20px;
    align-items: flex-end;
    border: 1px solid #666;
    border-bottom: 0;
  }

  .rand sup {
    align-self: flex-start;
    margin-right: -3px;
    font-size: 8px;
    line-height: 10px;
  }

  .rand .hot {
    align-items: center;
    border-color: #d090f8;
    color: #e060f0;
  }

  .slots {
    gap: 0;
  }

  .slots button,
  .slot-btn {
    width: 30px;
    height: 28px;
  }

  .docks {
    width: 182px;
    height: 26px;
    padding: 0 2px;
    background: #919191;
    color: #5c5c5c;
  }

  .workspace {
    display: grid;
    grid-template-columns: 243px minmax(0, 908fr) minmax(0, 754fr);
    flex: 1;
    min-height: 0;
    margin-top: -2px;
  }

  /* mixer strip */
  .mixer {
    display: flex;
    flex-direction: column;
    padding: 0 5px 0 2px;
    border-left: 1px solid #000;
    min-height: 0;
  }

  .sends {
    display: flex;
    flex-direction: column;
    gap: 6px;
    height: 86px;
    padding: 3px 0 0 3px;
    border-radius: 10px 0 0 10px;
    background: #3a3a3a;
  }

  .outputs {
    height: 84px;
    padding-top: 2px;
    background: #343434;
  }

  .slot {
    height: 26px;
    border-radius: 5px;
    background: #525252;
  }

  .slot.dim {
    background: #4a4a4a;
  }

  .thin-scroll {
    height: 6px;
    margin: 0 17px 0 22px;
    border-radius: 3px;
    background: #8d8d8d;
  }

  .output-row {
    display: flex;
    gap: 4px;
  }

  .output {
    justify-content: flex-start;
    width: 202px;
    height: 28px;
    padding-left: 2px;
    overflow: hidden;
    border-radius: 5px;
    background: linear-gradient(90deg, #dcdcdc 166px, #777 166px);
    color: #4a4a4a;
    font-size: 20px;
    font-weight: 700;
    white-space: nowrap;
  }

  .mini-knob {
    padding: 2px;
    border-radius: 5px;
    background: #111;
  }

  .mix-trim {
    display: flex;
    justify-content: center;
    padding: 12px 5px 14px 0;
    margin: 1px 0 0 2px;
    border-radius: 10px 10px 0 0;
    background: #323232;
  }

  .trim {
    justify-content: space-between;
    width: 128px;
    height: 40px;
    padding: 0 8px 0 9px;
    border-radius: 6px;
    background: #646464;
    color: #919191;
    font-size: 22px;
    font-weight: 700;
  }

  .mix-fx {
    display: flex;
    flex-direction: column;
    align-items: center;
    gap: 8px;
    height: 120px;
    margin-left: 2px;
    padding: 14px 5px 0 0;
    background: #919191;
  }

  .pill {
    display: flex;
    align-items: center;
    justify-content: space-between;
    width: 128px;
    height: 40px;
    padding: 0 19px 0 4px;
    border-radius: 9px;
    background: #2c2c2c;
    color: #646464;
  }

  .fx {
    gap: 6px;
    width: 66px;
    height: 32px;
    border-radius: 6px;
    background: #646464;
    color: #333;
    font-size: 23px;
    font-weight: 700;
  }

  .fx.active {
    color: #8cff4f;
  }

  .ring {
    width: 16px;
    height: 16px;
    border: 4px solid;
    border-radius: 50%;
  }

  .pan-row {
    display: flex;
    gap: 6px;
  }

  .knob,
  .center {
    height: 40px;
    border-radius: 7px;
    background: #2c2c2c;
  }

  .center {
    width: 82px;
    font-size: 20px;
    font-weight: 700;
  }

  .mix-main {
    display: flex;
    flex: 1;
    min-height: 0;
    margin-left: 2px;
    padding: 10px 7px 10px 26px;
    border-radius: 0 0 10px 10px;
    background: #404040;
  }

  .fader {
    width: 10px;
    margin: 8px 20px 24px 0;
    border-radius: 5px;
    background: linear-gradient(#7d7d7d 29%, #ef5fa7 29%);
  }

  .fader input {
    appearance: none;
    display: block;
    width: 30px;
    height: 100%;
    margin: 0 -10px;
    background: none;
    writing-mode: vertical-lr;
    direction: rtl;
  }

  .fader input::-webkit-slider-thumb {
    appearance: none;
    width: 30px;
    height: 30px;
    border-radius: 50%;
    background: #fff;
  }

  .meter-col {
    display: flex;
    flex-direction: column;
    padding-top: 8px;
  }

  .meter text {
    fill: #6c6c6c;
    font-size: 9px;
    font-weight: 700;
  }

  .meter .peak {
    fill: #8a8a8a;
  }

  .meter .rms {
    fill: #ccc;
  }

  output {
    padding-left: 20px;
    color: #d0d0d0;
    font-size: 20px;
    font-weight: 700;
    line-height: 38px;
  }

  .mix-buttons {
    display: flex;
    flex-direction: column;
    gap: 20px;
    margin-left: auto;
  }

  .stack {
    display: flex;
    flex-direction: column;
    align-items: center;
    width: 40px;
    padding-top: 7px;
    border-radius: 7px;
    background: #282828;
    font-size: 24px;
    font-weight: 700;
    line-height: 23px;
  }

  .stack svg {
    margin-bottom: 8px;
  }

  .stack.ms {
    height: 72px;
    margin-bottom: auto;
    line-height: 30px;
  }

  .stack.st {
    height: 100px;
  }

  .stack.msr {
    height: 120px;
  }

  .teal {
    color: #20e0c8;
  }

  .yellow {
    color: #f8e028;
  }

  .off {
    color: #666;
  }

  .mix-name {
    height: 39px;
    font-size: 27px;
    font-weight: 700;
    line-height: 38px;
    text-align: center;
    padding-right: 4px;
  }

  /* transport */
  .center-col {
    display: flex;
    flex-direction: column;
    min-height: 0;
  }

  .transport-row {
    display: flex;
    height: 120px;
  }

  .divider {
    width: 6px;
    margin-right: 2px;
    background: #5b5b5b;
  }

  .transport {
    display: flex;
    flex: 1;
    flex-direction: column;
    justify-content: space-between;
    min-width: 0;
    height: 118px;
    margin-right: 8px;
    padding: 10px 0 0 8px;
    border-radius: 10px;
    background: #404040;
  }

  .transport-boxes {
    display: flex;
    gap: 8px;
  }

  .box {
    display: flex;
    align-items: center;
    height: 60px;
    border-radius: 12px;
    background: #1a1a1a;
    font-weight: 700;
  }

  .controls {
    gap: 8px;
    padding: 0 4px;
  }

  .controls button {
    width: 52px;
    height: 52px;
  }

  .controls .loop {
    border-radius: 9px;
    background: #a05f00;
    color: #fff;
  }

  .tempo {
    gap: 11px;
    width: 240px;
    padding-left: 8px;
    font-size: 28px;
  }

  .bpm {
    justify-content: flex-end;
    gap: 15px;
    width: 128px;
    height: 44px;
    padding-right: 12px;
    border-radius: 7px;
    background: #919191;
    color: #1a1a1a;
  }

  .rate {
    flex: 1;
    flex-direction: column;
    align-items: stretch;
    margin-left: 10px;
    padding: 6px 0 0 9px;
    border-radius: 12px 0 0 12px;
    font-size: 23px;
  }

  .rate div {
    display: flex;
    gap: 53px;
    height: 28px;
  }

  .rate input {
    appearance: none;
    height: 14px;
    margin-top: 2px;
    border-radius: 7px;
    background: #535353;
  }

  .rate input::-webkit-slider-thumb {
    appearance: none;
    width: 22px;
    height: 22px;
    border-radius: 50%;
    background: #fff;
  }

  .auto {
    position: relative;
    align-items: flex-start;
    justify-content: flex-start;
    width: 96px;
    height: 36px;
    margin-bottom: -2px;
    padding: 2px 0 0 6px;
    border-radius: 9px 9px 0 0;
    background: #1a1a1a;
    color: #777;
    font-size: 22px;
  }

  .auto svg {
    position: absolute;
    right: 6px;
    bottom: 0;
  }

  /* track panel */
  .project {
    display: flex;
    flex: 1;
    gap: 8px;
    min-height: 0;
    padding: 7px 7px 0 2px;
  }

  .tcp {
    display: flex;
    flex-direction: column;
    width: 522px;
    min-height: 0;
  }

  .tcp-tools {
    display: flex;
    align-items: center;
    gap: 2px;
    height: 60px;
    margin: 1px 0 5px;
    padding-left: 14px;
    border-radius: 4px;
    background: #404040;
    color: #d8d8d8;
  }

  .tcp-tools > button {
    width: 28px;
    height: 28px;
  }

  .tcp-tools .white {
    border-radius: 3px;
    background: #dcdcdc;
    color: #333;
  }

  .tcp-tools .short {
    height: 25px;
    background: #c4c4c4;
  }

  .all-ms {
    display: flex;
    justify-content: space-around;
    width: 60px;
    height: 30px;
    border-radius: 4px;
    background: #282828;
    color: #919191;
    font-size: 20px;
    font-weight: 700;
  }

  .master-row {
    display: flex;
    gap: 4px;
    height: 137px;
    padding-top: 2px;
    background: #1a1a1a;
  }

  .master-card {
    display: flex;
    flex-direction: column;
    align-items: center;
    gap: 7px;
    width: 192px;
    height: 133px;
    padding: 4px 0 0 16px;
    border-radius: 12px 0 0 12px;
    background: #323232;
    color: #ccc;
    font-size: 23px;
    font-weight: 700;
    line-height: 27px;
  }

  .master-rest {
    flex: 1;
    margin-top: 2px;
    background: #222;
  }

  .tracks {
    display: flex;
    flex: 1;
    flex-direction: column;
    gap: 4px;
    padding-top: 7px;
    background: #1a1a1a;
    font-weight: 700;
  }

  .track {
    display: flex;
    height: 133px;
    background: linear-gradient(90deg, #1a1a1a 432px, #2d2d2d 432px);
  }

  .card {
    display: flex;
    width: 432px;
    border-radius: 12px;
    background: #323232;
  }

  .selected .card {
    width: 430px;
    margin-left: 2px;
    box-shadow: 0 0 0 2px #fff;
  }

  .gutter {
    display: flex;
    flex-direction: column;
    justify-content: flex-end;
    gap: 36px;
    width: 60px;
    padding: 0 0 8px 10px;
    color: #6a6a6a;
    font-size: 20px;
  }

  .selected .gutter {
    width: 58px;
    padding-left: 8px;
    color: #fff;
  }

  .gutter i {
    width: 12px;
    height: 12px;
    border-radius: 50%;
    background: #4c4c4c;
  }

  .rec-area {
    display: flex;
    flex-direction: column;
    gap: 4px;
    width: 186px;
    padding-top: 42px;
  }

  .rec-row {
    display: flex;
    gap: 4px;
  }

  .rec-box {
    display: flex;
    width: 80px;
    height: 40px;
    overflow: hidden;
    border-radius: 6px;
    background: #646464;
    color: #fff;
  }

  .rec-box button {
    width: 40px;
    height: 40px;
  }

  .rec i {
    width: 20px;
    height: 20px;
    border-radius: 50%;
    background: #7a1000;
  }

  .rec.armed {
    background: #f02410;
  }

  .rec.armed i {
    background: #fff;
  }

  .monitor {
    width: 44px;
    height: 40px;
    border-radius: 6px;
    background: #646464;
    color: #8cff4f;
  }

  .panel {
    display: flex;
    flex: 1;
    flex-direction: column;
    align-items: flex-end;
    gap: 4px;
    padding: 6px 6px 0 0;
    border-radius: 9px;
    background: #828282;
  }

  .selected .panel {
    background: #e8eeee;
  }

  .panel .pill {
    width: 136px;
    padding-right: 11px;
  }

  .panel .fx {
    gap: 9px;
    width: 72px;
  }

  .volume {
    position: relative;
    width: 136px;
    height: 40px;
    padding: 6px;
    border-radius: 9px;
    background: #2c2c2c;
  }

  .volume input {
    appearance: none;
    display: block;
    width: 124px;
    height: 28px;
    border-radius: 6px;
    background: linear-gradient(90deg, #f06a04 70%, #555 70%);
  }

  .volume input::-webkit-slider-thumb {
    appearance: none;
    width: 6px;
    height: 28px;
    background: #fff;
  }

  .volume span {
    position: absolute;
    left: 10px;
    top: 8px;
    color: #fff;
    font-size: 20px;
    line-height: 24px;
    pointer-events: none;
  }

  .pan {
    width: 136px;
    height: 20px;
    margin-top: 1px;
    padding: 6px;
    border-radius: 8px;
    background: #2c2c2c;
  }

  .pan input {
    appearance: none;
    display: block;
    width: 124px;
    height: 8px;
    border-radius: 4px;
    background: #555;
  }

  .pan input::-webkit-slider-thumb {
    appearance: none;
    width: 12px;
    height: 12px;
    border-radius: 50%;
    background: #fff;
    box-shadow: 0 0 0 1px #333;
  }

  .track-meter {
    display: flex;
    flex-direction: column;
    align-items: center;
    width: 26px;
    margin: 2px 8px 2px 10px;
    overflow: hidden;
    border-radius: 5px;
    background: #222;
    color: #7a7a7a;
    font-size: 9px;
    line-height: 12px;
  }

  .track-meter b {
    color: #0a4c7c;
    font-size: 20px;
    line-height: 24px;
  }

  .track-meter div {
    display: flex;
    gap: 2px;
    width: 100%;
    flex: 1;
  }

  .track-meter i {
    flex: 1;
  }

  .input i {
    background: #432a29;
  }

  .mute-solo {
    display: flex;
    flex-direction: column;
    width: 40px;
    height: 72px;
    margin-top: 6px;
    overflow: hidden;
    border-radius: 6px;
    background: #1c1c1c;
    font-size: 23px;
  }

  .mute-solo button {
    height: 36px;
  }

  .mute {
    padding-top: 4px;
  }

  .solo {
    padding-bottom: 4px;
  }

  .muted {
    background: #0272bc;
    color: #fff;
  }

  .status {
    height: 17px;
    border-top: 1px solid #777;
    background: #222;
    color: #8c949c;
    font-size: 10px;
    font-weight: 700;
    line-height: 17px;
  }

  /* arrange view */
  .arrange {
    display: flex;
    flex: 1;
    flex-direction: column;
    min-width: 0;
  }

  .ruler text {
    fill: #8a8a8a;
    font-weight: 700;
  }

  .ruler .mark {
    fill: #fff;
  }

  .canvas-row {
    display: flex;
    flex: 1;
    min-height: 0;
  }

  .canvas {
    flex: 1;
    min-width: 0;
    overflow: hidden;
  }

  .clip-dark,
  .clip-light {
    fill: #d0d0d0;
    font-size: 11px;
    font-weight: 700;
  }

  .clip-light {
    fill: #333;
  }

  .vscroll {
    display: flex;
    flex-direction: column;
    align-items: center;
    width: 17px;
    gap: 8px;
    padding: 5px 0 1px;
  }

  .vscroll .thumb {
    flex: 1;
    width: 13px;
    border-radius: 3px;
    background: #5e5e5e;
  }

  .tri {
    flex-shrink: 0;
    border: 4px solid transparent;
  }

  .tri.up {
    border-bottom: 7px solid #919191;
    border-top-width: 0;
  }

  .tri.down {
    border-top: 7px solid #919191;
    border-bottom-width: 0;
  }

  .tri.lft {
    border-right: 7px solid #919191;
    border-left-width: 0;
  }

  .tri.rgt {
    border-left: 7px solid #919191;
    border-right-width: 0;
  }

  .zoom {
    color: #919191;
    width: 13px;
    height: 13px;
  }

  .zoom.bright {
    color: #fff;
  }

  .hscroll {
    display: flex;
    align-items: center;
    gap: 8px;
    height: 18px;
    padding: 0 18px 0 5px;
  }

  .hscroll .thumb {
    width: 128px;
    height: 13px;
    margin-right: auto;
    border-radius: 3px;
    background: #5e5e5e;
  }

  /* midi editor */
  .midi {
    display: flex;
    flex-direction: column;
    min-width: 0;
    min-height: 0;
    background: #1b1b1b;
  }

  .midi-tools {
    gap: 2px;
    padding-left: 46px;
    background: #222;
  }

  .modes {
    display: flex;
    width: 117px;
    height: 27px;
    border: 1px solid #6a7472;
    background: #3a3a3a;
  }

  .modes button {
    flex: 1;
  }

  .modes .sel {
    background: #354642;
    border: solid #32cdb4;
    border-width: 1px 0;
  }

  .modes .sel:first-child {
    border-left-width: 1px;
  }

  .tile {
    width: 28px;
    height: 28px;
    border-radius: 3px;
    background: #3c3c3c;
  }

  .tile.pale {
    background: #dcdcdc;
    color: #333;
  }

  .apart {
    margin-left: 15px;
  }

  .far {
    margin-left: 29px;
  }

  .triplet {
    font-size: 12px;
    font-style: italic;
    font-weight: 700;
  }

  .midi-body {
    display: grid;
    grid-template-columns: 129px minmax(0, 418fr) 17px minmax(0, 189fr);
    flex: 1;
    min-height: 0;
    margin-top: 6px;
    padding-left: 1px;
  }

  .keys-col {
    display: flex;
    flex-direction: column;
    min-height: 0;
    border-right: 1px solid #222;
    background: #5a5a5a;
  }

  .pads {
    display: flex;
    gap: 11px;
    height: 64px;
    padding: 5px 12px;
  }

  .pads button {
    width: 46px;
    height: 23px;
    border: 1px solid #242424;
    background: #393939;
  }

  .keyboard {
    flex: 1;
    min-height: 0;
    overflow: hidden;
  }

  .keyboard text {
    fill: #222;
    font-size: 14px;
  }

  .lane-head {
    display: flex;
    flex-direction: column;
    justify-content: flex-end;
    height: 313px;
    padding-bottom: 18px;
    border-top: 1px solid #333;
  }

  .lane-head .pads {
    height: 35px;
  }

  .lane-pick {
    display: flex;
    align-items: flex-end;
    gap: 4px;
    padding: 0 3px 0 1px;
  }

  .plus {
    width: 9px;
    height: 9px;
    outline: 1px solid #fff;
    outline-offset: -1px;
  }

  .lane-name {
    flex: 1;
    justify-content: space-between;
    height: 20px;
    padding: 0 4px 0 5px;
    border: 1px solid #fff;
    color: #eee;
  }

  .roll-col {
    display: flex;
    flex-direction: column;
    min-height: 0;
    background: #2a2a2a;
  }

  .roll-ruler {
    height: 60px;
    background: #303030;
  }

  .roll-ruler text {
    fill: #eee;
    font-size: 10px;
    font-weight: 700;
  }

  .roll {
    flex: 1;
    min-height: 0;
    overflow: hidden;
  }

  .splitter {
    display: flex;
    align-items: center;
    justify-content: space-between;
    height: 9px;
    padding: 0 2px;
    background: #181818;
  }

  .velocity {
    height: 291px;
  }

  .midi-h {
    height: 17px;
    padding: 0 1px 0 5px;
    background: #222;
  }

  .midi-h .thumb {
    width: 18px;
  }

  .midi-v {
    display: flex;
    flex-direction: column;
    min-height: 0;
  }

  .v-top {
    display: flex;
    flex: 1;
    flex-direction: column;
    align-items: center;
    gap: 8px;
    padding: 69px 0 1px;
    background: #222;
  }

  .v-top .thumb {
    width: 13px;
    height: 102px;
    margin: auto 0 7px;
    border-radius: 3px;
    background: #5e5e5e;
  }

  .v-corner {
    height: 9px;
    background: #5a5a5a;
  }

  .v-bottom {
    display: flex;
    flex-direction: column;
    align-items: center;
    justify-content: flex-end;
    gap: 4px;
    height: 291px;
    margin-bottom: 17px;
    padding-bottom: 1px;
    background: linear-gradient(#181818 257px, #222 257px);
  }

  .track-list {
    padding-left: 7px;
  }

  .item {
    display: flex;
    gap: 1px;
    height: 17px;
    margin-right: 2px;
    padding: 1px;
    background: #0e0e0e;
    color: #919191;
  }

  .item .name {
    display: flex;
    flex: 1;
    align-items: center;
    gap: 7px;
    padding: 0 2px 0 3px;
    background: #45658f;
    color: #101820;
  }

  .item .name span {
    margin-left: auto;
  }

  .item b {
    width: 12px;
    height: 12px;
    border: 1px solid #111;
  }

  .item button {
    width: 16px;
    background: #222;
  }

  .item .vis {
    background: #45658f;
  }

  .item .armed {
    background: #b54e3e;
  }

  .item .grey {
    background: #444;
    font-size: 13px;
    font-weight: 700;
  }

  .midi-footer {
    display: flex;
    align-items: center;
    height: 28px;
    padding: 0 2px 0 5px;
    color: #b8b8b8;
    font-size: 11px;
  }

  .mini-transport {
    display: flex;
    gap: 8px;
    margin-right: 17px;
    color: #919191;
  }

  .mini-transport .amber {
    width: 16px;
    color: #f5b018;
  }

  .combo {
    position: relative;
    height: 21px;
    margin: 0 4px 0 6px;
  }

  .combo select {
    appearance: none;
    width: 100%;
    height: 100%;
    padding: 0 3px;
    border: 1px solid #999;
    border-radius: 0;
    background: #e1e1e1;
    color: #111;
    font: inherit;
  }

  .combo svg {
    position: absolute;
    right: 5px;
    top: 8px;
    pointer-events: none;
  }

  .editable select {
    border: 2px solid #fff;
    background: linear-gradient(90deg, #383838 calc(100% - 18px), #fff calc(100% - 18px));
    color: #bbb;
  }

  .size {
    width: 64px;
  }

  .shape {
    width: 60px;
    margin: 0 10px 0 0;
  }

  .notes {
    width: 54px;
  }

  .snap {
    display: flex;
    align-items: center;
    gap: 5px;
    margin-left: 10px;
  }

  .snap input {
    appearance: none;
    width: 12px;
    height: 12px;
    background: #fff;
  }

  .combo.end {
    width: 89px;
    margin-left: auto;
    margin-right: 3px;
  }

  .combo.last {
    width: 89px;
    margin: 0;
  }

  .tabs {
    display: flex;
    gap: 4px;
    height: 14px;
    padding-left: 2px;
    background: #000;
    color: #ccc;
    font-size: 10px;
    font-weight: 700;
  }

  .tabs button {
    gap: 4px;
    height: 14px;
    padding: 0 16px 0 6px;
    border-radius: 4px;
    background: #b06a00;
    color: #fff;
  }
</style>
